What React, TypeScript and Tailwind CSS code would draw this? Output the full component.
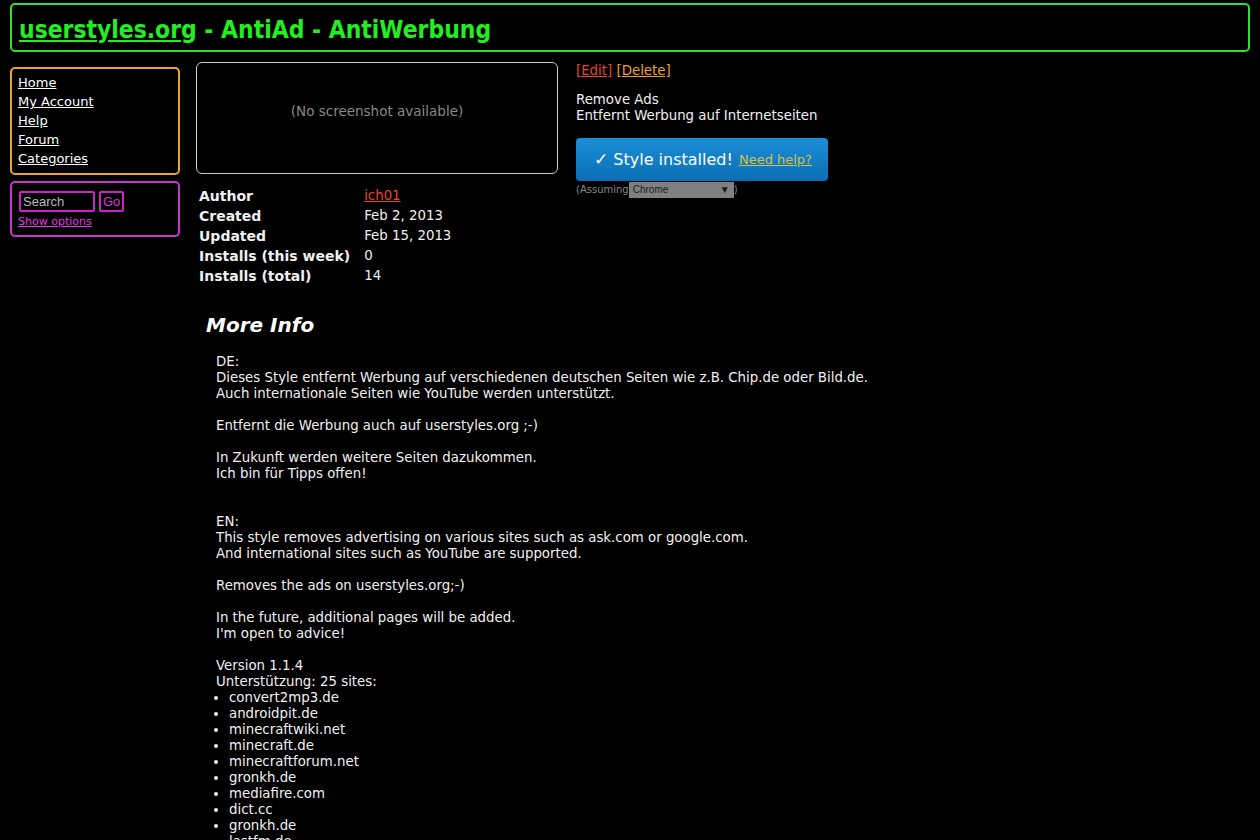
import React from "react";

const sites = [
  "convert2mp3.de",
  "androidpit.de",
  "minecraftwiki.net",
  "minecraft.de",
  "minecraftforum.net",
  "gronkh.de",
  "mediafire.com",
  "dict.cc",
  "gronkh.de",
  "lastfm.de",
  "chip.de",
  "bild.de",
  "youtube.com",
  "userstyles.org",
  "ask.com",
  "google.com",
  "google.de",
  "spiegel.de",
  "focus.de",
  "welt.de",
  "t-online.de",
  "gmx.net",
  "web.de",
  "computerbild.de",
  "giga.de",
];

const info: [string, React.ReactNode][] = [
  ["Author", <a href="#" className="text-[#e8452a] underline">ich01</a>],
  ["Created", "Feb 2, 2013"],
  ["Updated", "Feb 15, 2013"],
  ["Installs (this week)", "0"],
  ["Installs (total)", "14"],
];

export default function App() {
  return (
    <div className="min-h-screen bg-black text-[#f0f0f0] font-['DejaVu_Sans',sans-serif] text-[13.33px] leading-4 pt-[3px] px-[10px]">
      {/* Kopf */}
      <header className="border-2 border-[#33dd33] rounded-[5px] h-[49px] flex items-center px-[7px] pt-[4px]">
        <h1 className="text-[24.4px] font-bold text-[#22ee22] font-['DejaVu_Sans_Condensed','DejaVu_Sans',sans-serif]">
          <a href="#" className="underline">userstyles.org</a> - AntiAd - AntiWerbung
        </h1>
      </header>

      <div className="flex mt-[11px]">
        {/* Seitenleiste */}
        <aside className="w-[170px] shrink-0 mt-[4px] flex flex-col gap-[6px]">
          <nav className="border-2 border-[#eea23a] rounded-[5px] px-[6px] pt-[4px] pb-[5px] flex flex-col leading-[19px] text-[13px]">
            {["Home", "My Account", "Help", "Forum", "Categories"].map((l) => (
              <a key={l} href="#" className="underline text-white">{l}</a>
            ))}
          </nav>
          <div className="border-2 border-[#cc33cc] rounded-[5px] pl-[7px] pr-[6px] pt-[8px] pb-[6px]">
            <div className="flex gap-[4px]">
              <input
                placeholder="Search"
                className="w-[76px] h-[21px] border-2 border-[#cc22cc] rounded-[2px] bg-black text-[13px] px-[2px] font-['Liberation_Sans',sans-serif] placeholder:text-[#bbbbbb]"
              />
              <button className="h-[21px] px-[2px] border-2 border-[#cc22cc] rounded-[2px] text-[#dd33dd] text-[13px] font-['Liberation_Sans',sans-serif]">
                Go
              </button>
            </div>
            <a href="#" className="block -ml-px mt-[3px] text-[11px] leading-[14px] underline text-[#ee33ee]">
              Show options
            </a>
          </div>
        </aside>

        {/* Inhalt */}
        <main className="ml-[16px] flex-1">
          <div className="flex gap-[18px]">
            <div className="w-[362px] -mt-px">
              <div className="h-[112px] border border-[#cccccc] rounded-[6px] pt-[40px] text-center text-[#888888] text-[13.5px]">
                (No screenshot available)
              </div>
              <table className="mt-[11px] ml-px border-separate border-spacing-[2px]">
                <tbody>
                  {info.map(([k, v]) => (
                    <tr key={k}>
                      <th className="text-left text-[14px] font-bold pr-[12px] py-[1px] leading-[16px]">{k}</th>
                      <td className="py-[1px] leading-[16px]">{v}</td>
                    </tr>
                  ))}
                </tbody>
              </table>
            </div>

            <div>
              <div className="leading-4">
                <a href="#" className="underline text-[#e8452a]">[Edit]</a>{" "}
                <a href="#" className="underline text-[#f0a020]">[Delete]</a>
              </div>
              <p className="mt-[13px] leading-4">
                Remove Ads
                <br />
                Entfernt Werbung auf Internetseiten
              </p>
              <div className="mt-[14px] w-[252px] h-[43px] rounded-[4px] bg-gradient-to-b from-[#1a8ed6] to-[#0a6fb6] flex items-center justify-center gap-[6px] pl-[2px]">
                <span className="text-white text-[16px]">
                  <span className="font-bold text-[17px]">✓</span> Style installed!
                </span>
                <a href="#" className="underline text-[#d8c040] text-[13px]">Need help?</a>
              </div>
              <div className="mt-[1px] flex items-center text-[10px] text-[#888888] leading-[16px]">
                (Assuming
                <span className="w-[105px] h-[16px] bg-[#808080] text-[#1a1a1a] flex items-center justify-between px-[4px] font-['Liberation_Sans',sans-serif]">
                  Chrome
                  <span className="text-[10px]">▼</span>
                </span>
                )
              </div>
            </div>
          </div>

          <h2 className="mt-[26px] ml-[10px] text-[20px] font-bold italic text-white leading-6">More Info</h2>

          <div className="mt-[17px] ml-[20px] leading-4">
            <p>DE:</p>
            <p>Dieses Style entfernt Werbung auf verschiedenen deutschen Seiten wie z.B. Chip.de oder Bild.de.</p>
            <p>Auch internationale Seiten wie YouTube werden unterstützt.</p>
            <br />
            <p>Entfernt die Werbung auch auf userstyles.org ;-)</p>
            <br />
            <p>In Zukunft werden weitere Seiten dazukommen.</p>
            <p>Ich bin für Tipps offen!</p>
            <br />
            <br />
            <p>EN:</p>
            <p>This style removes advertising on various sites such as ask.com or google.com.</p>
            <p>And international sites such as YouTube are supported.</p>
            <br />
            <p>Removes the ads on userstyles.org;-)</p>
            <br />
            <p>In the future, additional pages will be added.</p>
            <p>I'm open to advice!</p>
            <br />
            <p>Version 1.1.4</p>
            <p>Unterstützung: 25 sites:</p>
            <ul className="list-disc pl-[13px]">
              {sites.map((s, i) => (
                <li key={i}>{s}</li>
              ))}
            </ul>
          </div>
        </main>
      </div>
    </div>
  );
}
